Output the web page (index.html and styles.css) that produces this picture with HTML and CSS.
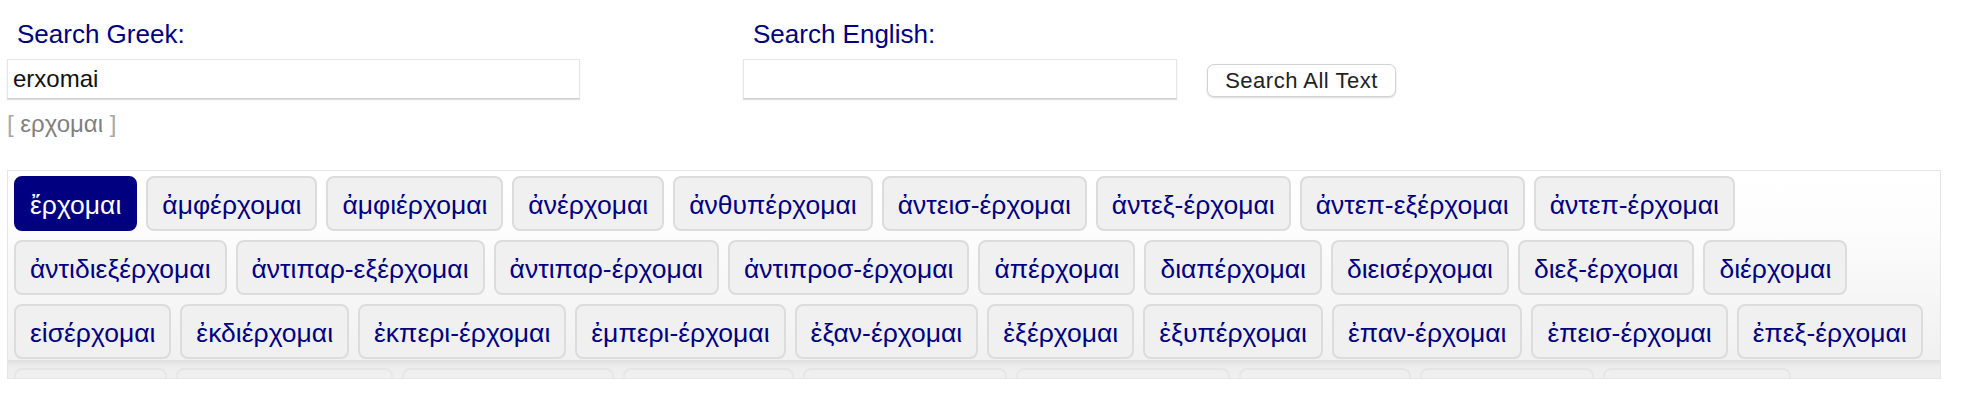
FILE: index.html
```html
<!DOCTYPE html>
<html lang="el">
<head>
<meta charset="utf-8">
<title>Search</title>
<link rel="stylesheet" href="styles.css">
</head>
<body>
<div class="search-row">
  <div class="col col-greek">
    <label class="label" for="greek">Search Greek:</label>
    <input class="field field-greek" id="greek" type="text" value="erxomai">
    <div class="hint"><span class="br">[</span> ερχομαι <span class="br">]</span></div>
  </div>
  <div class="col col-english">
    <label class="label" for="english">Search English:</label>
    <input class="field field-english" id="english" type="text" value="">
  </div>
  <div class="col col-btn">
    <button class="all-btn" type="button">Search All Text</button>
  </div>
</div>

<div class="results">
  <button class="word selected" type="button">ἔρχομαι</button>
  <button class="word" type="button">ἀμφέρχομαι</button>
  <button class="word" type="button">ἀμφιέρχομαι</button>
  <button class="word" type="button">ἀνέρχομαι</button>
  <button class="word" type="button">ἀνθυπέρχομαι</button>
  <button class="word" type="button">ἀντεισ-έρχομαι</button>
  <button class="word" type="button">ἀντεξ-έρχομαι</button>
  <button class="word" type="button">ἀντεπ-εξέρχομαι</button>
  <button class="word" type="button">ἀντεπ-έρχομαι</button>
  <button class="word" type="button">ἀντιδιεξέρχομαι</button>
  <button class="word" type="button">ἀντιπαρ-εξέρχομαι</button>
  <button class="word" type="button">ἀντιπαρ-έρχομαι</button>
  <button class="word" type="button">ἀντιπροσ-έρχομαι</button>
  <button class="word" type="button">ἀπέρχομαι</button>
  <button class="word" type="button">διαπέρχομαι</button>
  <button class="word" type="button">διεισέρχομαι</button>
  <button class="word" type="button">διεξ-έρχομαι</button>
  <button class="word" type="button">διέρχομαι</button>
  <button class="word" type="button">εἰσέρχομαι</button>
  <button class="word" type="button">ἐκδιέρχομαι</button>
  <button class="word" type="button">ἐκπερι-έρχομαι</button>
  <button class="word" type="button">ἐμπερι-έρχομαι</button>
  <button class="word" type="button">ἐξαν-έρχομαι</button>
  <button class="word" type="button">ἐξέρχομαι</button>
  <button class="word" type="button">ἐξυπέρχομαι</button>
  <button class="word" type="button">ἐπαν-έρχομαι</button>
  <button class="word" type="button">ἐπεισ-έρχομαι</button>
  <button class="word" type="button">ἐπεξ-έρχομαι</button>
  <button class="word" type="button">ἐπέρχομαι</button>
  <button class="word" type="button">ἐπιπαρ-έρχομαι</button>
  <button class="word" type="button">ἐπισυν-έρχομαι</button>
  <button class="word" type="button">κατ-έρχομαι</button>
  <button class="word" type="button">μετεισ-έρχομαι</button>
  <button class="word" type="button">παρεισ-έρχομαι</button>
  <button class="word" type="button">παρέρχομαι</button>
  <button class="word" type="button">περιέρχομαι</button>
  <button class="word" type="button">προσέρχομαι</button>
  <div class="fade"></div>
</div>
</body>
</html>
```

FILE: styles.css
```css
html, body {
  margin: 0;
  padding: 0;
  background: #ffffff;
}

body {
  font-family: "Liberation Sans", Arial, "Noto Sans", sans-serif;
}

.search-row {
  display: flex;
  align-items: flex-start;
  padding: 19px 0 0 7px;
}

.col {
  display: flex;
  flex-direction: column;
}

.col-greek {
  width: 736px;
}

.col-english {
  width: 434px;
}

.col-btn {
  margin-left: 30px;
  padding-top: 45px;
}

.label {
  display: block;
  padding-left: 10px;
  font-size: 26px;
  line-height: 30px;
  color: #000080;
  margin-bottom: 10px;
}

.field {
  box-sizing: border-box;
  height: 40px;
  margin: 0;
  padding: 0 0 0 5px;
  border: 1px solid #e6e6e6;
  border-bottom: 1px solid #cfcfcf;
  box-shadow: 0 1px 1px rgba(0, 0, 0, 0.12);
  background: #ffffff;
  font-family: "Liberation Sans", Arial, sans-serif;
  font-size: 24px;
  color: #111111;
  outline: none;
}

.field-greek {
  width: 573px;
}

.field-english {
  width: 434px;
}

.hint {
  margin-top: 12px;
  font-size: 24px;
  line-height: 26px;
  color: #7f7f7f;
}

.hint .br {
  color: #a8a8a8;
}

.all-btn {
  box-sizing: border-box;
  width: 189px;
  height: 33px;
  padding: 0;
  margin: 0;
  border: 1px solid #d2d2d2;
  border-radius: 7px;
  background: #ffffff;
  box-shadow: 0 1px 2px rgba(0, 0, 0, 0.15);
  font-family: "Liberation Sans", Arial, sans-serif;
  font-size: 22px;
  letter-spacing: 0.5px;
  line-height: 29px;
  color: #222222;
}

.results {
  position: relative;
  box-sizing: border-box;
  margin: 33px 0 0 7px;
  width: 1934px;
  height: 209px;
  overflow: hidden;
  border: 1px solid #e6e6e6;
  padding: 5px 6px;
  display: flex;
  flex-wrap: wrap;
  align-content: flex-start;
  gap: 9px 9px;
  background: linear-gradient(to bottom, #ffffff 0%, #fdfdfd 25%, #efefef 100%);
}

.word {
  box-sizing: border-box;
  height: 55px;
  margin: 0;
  padding: 4px 14px 0 14px;
  border: 2px solid #dcdcdc;
  border-radius: 8px;
  background: #f0f0f0;
  color: #000080;
  font-family: "Liberation Sans", Arial, sans-serif;
  font-size: 26.5px;
  line-height: 45px;
  white-space: nowrap;
}

.word.selected {
  background: #000080;
  border-color: #000080;
  color: #ffffff;
}

.fade {
  position: absolute;
  left: 0;
  right: 0;
  bottom: 0;
  height: 18px;
  background: linear-gradient(to bottom, rgba(190, 190, 190, 0.35) 0%, rgba(235, 235, 235, 0.55) 35%, rgba(240, 240, 240, 0.6) 100%);
  pointer-events: none;
}
```
